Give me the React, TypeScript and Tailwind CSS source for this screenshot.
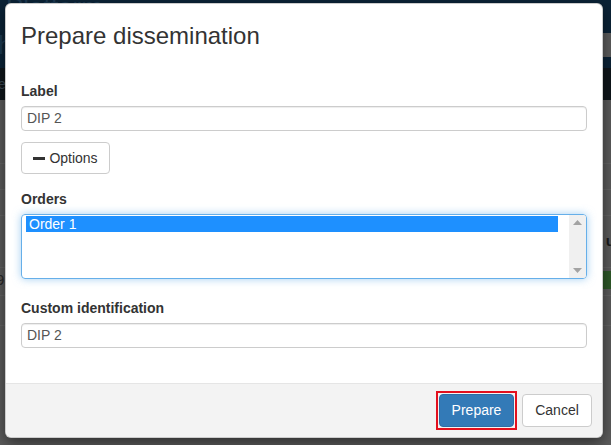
import React from "react"

const font = { fontFamily: '"Liberation Sans", Arial, sans-serif' }

function Backdrop() {
  return (
    <div className="absolute inset-0 flex flex-col overflow-hidden">
      <div className="relative h-[68px] bg-[#0b2337] text-[#1d3a52]">
        <div className="absolute left-[6px] top-[-12px] text-[26px]">Platform</div>
        <div className="absolute left-[-2px] top-[26px] text-[26px]">h</div>
        <div className="absolute right-[-8px] top-[33px] h-[24px] w-[20px] rounded-[4px] bg-[#5d5d5d]" />
      </div>
      <div className="relative h-[32px] bg-[#0f161b] text-[#3b4a55]">
        <div className="absolute left-[-2px] top-[6px] text-[14px]">e</div>
      </div>
      <div className="flex flex-1 flex-col bg-[#5c5c5c]">
        <div className="h-[64px] border-b border-[#656565]" />
        <div className="h-[26px] border-b border-[#656565]" />
        <div className="h-[26px] border-b border-[#656565]" />
        <div className="relative h-[52px] border-b border-[#656565]">
          <div className="absolute right-[-4px] top-[14px] text-[15px] font-bold text-[#1a1a1a]">u</div>
        </div>
        <div className="relative h-[28px] border-b border-[#656565]">
          <div className="absolute left-[-4px] top-[1px] text-[15px] text-[#2a2a2a]">9</div>
          <div className="absolute right-0 top-[3px] h-[18px] w-[12px] bg-[#2f5a2a]" />
        </div>
        <div className="h-[30px] border-b border-[#656565]" />
      </div>
    </div>
  )
}

function Label({ children }: { children: React.ReactNode }) {
  return <div className="mb-[5px] h-[20px] text-[14px] leading-[20px] font-bold text-[#333]">{children}</div>
}

function TextInput({ value }: { value: string }) {
  return (
    <div className="flex h-[25px] items-center rounded-[4px] border border-[#ccc] px-[5px] text-[14px] text-[#555] shadow-[inset_0_1px_1px_rgba(0,0,0,0.075)]">
      {value}
    </div>
  )
}

export default function App() {
  return (
    <div className="relative h-[445px] w-[611px] overflow-hidden" style={font}>
      <Backdrop />
      <div className="absolute left-[5px] top-[3px] flex h-[435px] w-[598px] flex-col rounded-[6px] border border-[rgba(0,0,0,0.2)] bg-white shadow-[0_5px_15px_rgba(0,0,0,0.5)]">
        <div className="flex h-[63px] shrink-0 items-center px-[15px]">
          <h4 className="text-[24px] leading-[26px] text-[#333]">Prepare dissemination</h4>
        </div>
        <div className="flex-1 px-[15px] pt-[14px]">
          <Label>Label</Label>
          <TextInput value="DIP 2" />
          <button className="mt-[11px] flex h-[32px] w-[89px] items-center justify-center gap-[4px] rounded-[4px] border border-[#ccc] bg-white text-[14px] text-[#333]">
            <span className="h-[3px] w-[12px] bg-[#333]" />
            Options
          </button>
          <div className="mt-[15px]">
            <Label>Orders</Label>
            <div className="flex h-[65px] overflow-hidden rounded-[4px] border border-[#66afe9] shadow-[0_0_8px_rgba(102,175,233,0.6)]">
              <div className="flex-1 pl-[4px] pr-[11px] pt-[1px]">
                <div className="h-[16px] bg-[#1e90ff] pl-[3px] text-[14px] leading-[16px] text-white">Order 1</div>
              </div>
              <div className="flex w-[17px] flex-col items-center justify-between bg-[#f0f0f0] py-[5px]">
                <svg width="9" height="5" viewBox="0 0 9 5">
                  <path d="M0 5 L4.5 0 L9 5 Z" fill="#a3a3a3" />
                </svg>
                <svg width="9" height="5" viewBox="0 0 9 5">
                  <path d="M0 0 L9 0 L4.5 5 Z" fill="#a3a3a3" />
                </svg>
              </div>
            </div>
          </div>
          <div className="mt-[19px]">
            <Label>Custom identification</Label>
            <TextInput value="DIP 2" />
          </div>
        </div>
        <div className="flex h-[54px] shrink-0 items-center justify-end gap-[5px] rounded-b-[6px] border-t border-[#e5e5e5] bg-[#f3f3f3] pr-[10px]">
          <div className="border-2 border-[#e3101e] p-[1px]">
            <button className="block h-[33px] w-[75px] rounded-[4px] border border-[#2e6da4] bg-[#337ab7] text-[14px] text-white">
              Prepare
            </button>
          </div>
          <button className="h-[33px] w-[70px] rounded-[4px] border border-[#ccc] bg-white text-[14px] text-[#333]">
            Cancel
          </button>
        </div>
      </div>
    </div>
  )
}
